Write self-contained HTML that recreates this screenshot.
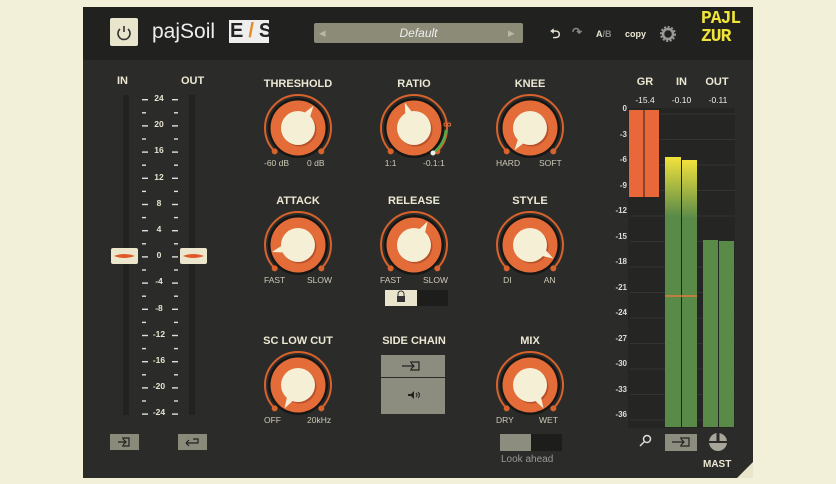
<!DOCTYPE html><html><head><meta charset="utf-8"><style>
body{margin:0;width:836px;height:484px;background:#f2f0d8;overflow:hidden;font-family:"Liberation Sans",sans-serif}
#p{position:absolute;left:83px;top:7px;width:670px;height:471px;background:#2b2b29}
#h{position:absolute;left:83px;top:7px;width:670px;height:53px;background:#212120}
.t{position:absolute;color:#ece8d4;font-weight:bold;font-size:11px;text-align:center;white-space:nowrap}
.s{position:absolute;color:#cfcab6;font-size:8.5px;white-space:nowrap}
</style></head><body>
<div id="p"></div><div id="h"></div>
<div style="position:absolute;left:110px;top:18px;width:28px;height:28px;background:#e9e5cc;border-radius:2px"></div>
<svg style="position:absolute;left:110px;top:18px" width="28" height="28"><path d="M10 11 A6 6 0 1 0 18 11" fill="none" stroke="#333" stroke-width="1.6"/><line x1="14" y1="8" x2="14" y2="14" stroke="#333" stroke-width="1.6"/></svg>
<div class="t" style="left:152px;top:20px;font-size:21px;font-weight:normal;color:#eee">pajSoil</div>
<div style="position:absolute;left:229px;top:20px;width:40px;height:23px;background:#eee;"></div>
<div class="t" style="left:230px;top:20px;font-size:20px;color:#222;font-weight:900;letter-spacing:5px">E<span style="color:#e48a2a">/</span>S</div>
<div style="position:absolute;left:314px;top:23px;width:209px;height:20px;background:#8b8b78;border-radius:2px"></div>
<div class="s" style="left:319px;top:28px;color:#b8b8a6">◀</div><div class="s" style="left:508px;top:28px;color:#b8b8a6">▶</div>
<div class="t" style="left:314px;top:26px;width:209px;font-weight:normal;font-style:italic;font-size:12px;color:#eee">Default</div>
<div class="t" style="left:550px;top:25px;font-size:13px">⮌</div><div class="t" style="left:572px;top:25px;font-size:12px;color:#888">↷</div>
<div class="t" style="left:596px;top:29px;font-size:9px">A<span style="color:#888">/B</span></div>
<div class="t" style="left:625px;top:29px;font-size:9px">copy</div>
<svg style="position:absolute;left:659px;top:25px" width="18" height="18"><circle cx="9" cy="9" r="5" fill="none" stroke="#999" stroke-width="2.5"/><circle cx="9" cy="9" r="7" fill="none" stroke="#999" stroke-width="2" stroke-dasharray="2 1.6"/></svg>
<div class="t" style="left:701px;top:10px;font-size:18px;line-height:18px;color:#f0e43a;font-family:'Liberation Mono',monospace;text-align:left;letter-spacing:-1px">PAJL<br>ZUR</div>
<div class="t" style="left:117px;top:75px">IN</div><div class="t" style="left:181px;top:75px">OUT</div>
<svg id="sv" style="position:absolute;left:0;top:0" width="836" height="484"></svg>
<div id="tx"></div>
<script>
let s='',t='';
function T(x,y,txt,cls,st){t+=`<div class="${cls}" style="left:${x}px;top:${y}px;${st||''}">${txt}</div>`}
s+=`<rect x="123" y="95" width="6" height="320" fill="#222"/><rect x="189" y="95" width="6" height="320" fill="#222"/>`;
for(let i=0;i<=24;i++){let y=99+i*13.1;s+=`<rect x="142" y="${y}" width="${i%2?4:6}" height="1.4" fill="#ddd"/><rect x="${i%2?174:172}" y="${y}" width="${i%2?4:6}" height="1.4" fill="#ddd"/>`;
 if(i%2==0){let v=24-i*2;T(150,y-6,v,'s','width:18px;text-align:center;font-weight:bold;color:#e8e4d0');}}
for(const x of[111,180]){s+=`<rect x="${x}" y="248" width="27" height="16" rx="2" fill="#ece6cc"/><path d="M${x+3} 256 Q${x+13} 252 ${x+24} 256 Q${x+13} 260 ${x+3} 256Z" fill="#e0582a"/>`}
s+=`<rect x="110" y="434" width="29" height="16" fill="#8a8a7a"/><rect x="178" y="434" width="29" height="16" fill="#8a8a7a"/>
<path d="M118 442h8m-3-3l3 3-3 3M122 438h7v8h-7" stroke="#222" fill="none" stroke-width="1.2"/><path d="M186 443h12v-4h-5m-7 4l3-3m-3 3l3 3" stroke="#222" fill="none" stroke-width="1.2"/>`;
function K(cx,cy,a,lab,l1,l2){const r=33;let rad=d=>d*Math.PI/180;
 let p=(d,R)=>[cx+R*Math.sin(rad(d)),cy-R*Math.cos(rad(d))];
 let [ax,ay]=p(-135,r),[bx,by]=p(135,r);
 s+=`<path d="M${ax} ${ay} A${r} ${r} 0 1 1 ${bx} ${by}" fill="none" stroke="#d8622c" stroke-width="2"/>`;
 s+=`<circle cx="${cx}" cy="${cy}" r="30" fill="#171716"/><circle cx="${cx}" cy="${cy}" r="27.5" fill="#e36c38"/>
 <circle cx="${ax}" cy="${ay}" r="3" fill="#d8622c"/><circle cx="${bx}" cy="${by}" r="3" fill="#d8622c"/>`;
 let [tx,ty]=p(a,27),[l,lt]=p(a-18,14),[rr,rt]=p(a+18,14);
 s+=`<circle cx="${cx+1.5}" cy="${cy+1.5}" r="17" fill="#b8502a"/><path d="M${l} ${lt} L${tx} ${ty} L${rr} ${rt}Z" fill="#f5efd6"/><circle cx="${cx}" cy="${cy}" r="17" fill="#f5efd6"/>`;
 T(cx-60,cy-50,lab,'t','width:120px');T(cx-34,cy+30,l1,'s');T(cx+9,cy+30,l2,'s');}
K(298,128,35,'THRESHOLD','-60 dB','0 dB');K(414,128,-20,'RATIO','&nbsp;&nbsp;1:1','-0.1:1');K(530,128,-145,'KNEE','HARD','SOFT');
K(298,245,-105,'ATTACK','FAST','SLOW');K(414,245,30,'RELEASE','FAST','SLOW');K(530,245,120,'STYLE','&nbsp;&nbsp;&nbsp;DI','&nbsp;&nbsp;AN');
K(298,385,-150,'SC LOW CUT','OFF','20kHz');K(530,385,150,'MIX','DRY','WET');
s+=`<path d="M446 130 A33 33 0 0 1 433 153" fill="none" stroke="#4caf4a" stroke-width="2.5"/><circle cx="433" cy="153" r="2.5" fill="#eee"/>`;
T(443,117,'∞','t','color:#e36c38;font-size:12px');
s+=`<rect x="385" y="290" width="32" height="16" fill="#e9e4cc"/><rect x="417" y="290" width="31" height="16" fill="#1d1d1c"/><rect x="397" y="296" width="8" height="6" fill="#333"/><path d="M398 296v-2a3 3 0 0 1 6 0v2" stroke="#333" fill="none"/>`;
T(354,335,'SIDE CHAIN','t','width:120px');
s+=`<rect x="381" y="355" width="64" height="22" fill="#8d8d7f"/><rect x="381" y="378" width="64" height="36" fill="#8d8d7f"/><path d="M402 366h12m-3-3l3 3-3 3M410 362h9v8h-9" stroke="#222" fill="none" stroke-width="1.2"/><path d="M408 394h3l3-3v8l-3-3h-3z" fill="#222"/><path d="M416 393q2 2 0 4M418 392q3 3 0 6" stroke="#222" fill="none"/>`;
s+=`<rect x="500" y="434" width="31" height="17" fill="#8d8d7f"/><rect x="531" y="434" width="31" height="17" fill="#1d1d1c"/>`;
T(501,454,'Look ahead','s','font-size:10px;color:#999');
s+=`<defs><linearGradient id="g" x1="0" y1="0" x2="0" y2="1"><stop offset="0" stop-color="#f2e23c"/><stop offset=".22" stop-color="#5a8a48"/><stop offset="1" stop-color="#5a8a48"/></linearGradient></defs>`;
s+=`<rect x="628" y="108" width="107" height="320" fill="#252523"/>`;
for(let i=0;i<=12;i++){let y=110+i*25.5;T(613,y-6,i?'-'+i*3:'&nbsp;0','s','font-size:8px;color:#ddd;font-weight:bold;width:14px;text-align:right');s+=`<line x1="630" y1="${y+4}" x2="735" y2="${y+4}" stroke="#333" />`}
s+=`<rect x="629" y="110" width="30" height="87" fill="#e9683a"/><line x1="644" y1="110" x2="644" y2="197" stroke="#222"/>
<rect x="665" y="157" width="16" height="270" fill="url(#g)"/><rect x="682" y="160" width="15" height="267" fill="url(#g)"/><line x1="681.5" y1="157" x2="681.5" y2="427" stroke="#222"/>
<line x1="665" y1="296" x2="697" y2="296" stroke="#e07a3a" stroke-width="1.5"/>
<rect x="703" y="240" width="15" height="187" fill="#5a8a48"/><rect x="719" y="241" width="15" height="186" fill="#5a8a48"/><line x1="718.5" y1="240" x2="718.5" y2="427" stroke="#222"/>`;
T(630,76,'GR','t','width:30px');T(665,76,'IN','t','width:33px');T(700,76,'OUT','t','width:34px');
T(630,95,'-15.4','s','width:30px;text-align:center;color:#eee');T(665,95,'-0.10','s','width:33px;text-align:center;color:#eee');T(701,95,'-0.11','s','width:34px;text-align:center;color:#eee');
s+=`<circle cx="647" cy="439" r="3.5" fill="none" stroke="#ddd" stroke-width="1.5"/><line x1="644" y1="442" x2="640" y2="446" stroke="#ddd" stroke-width="1.5"/>
<rect x="665" y="434" width="32" height="17" fill="#8d8d7f"/><path d="M672 442h12m-3-3l3 3-3 3M680 438h9v8h-9" stroke="#222" fill="none" stroke-width="1.2"/>
<circle cx="718" cy="442" r="9" fill="#a8a69a"/><rect x="709" y="441" width="18" height="2" fill="#2b2b29"/><rect x="716.5" y="433" width="3" height="8" fill="#2b2b29"/>
<path d="M753 462 L753 478 L737 478Z" fill="#e9e6cc"/>`;
T(703,459,'MAST','t','font-size:10px');
document.getElementById('sv').innerHTML=s;document.getElementById('tx').innerHTML=t;
</script></body></html>
